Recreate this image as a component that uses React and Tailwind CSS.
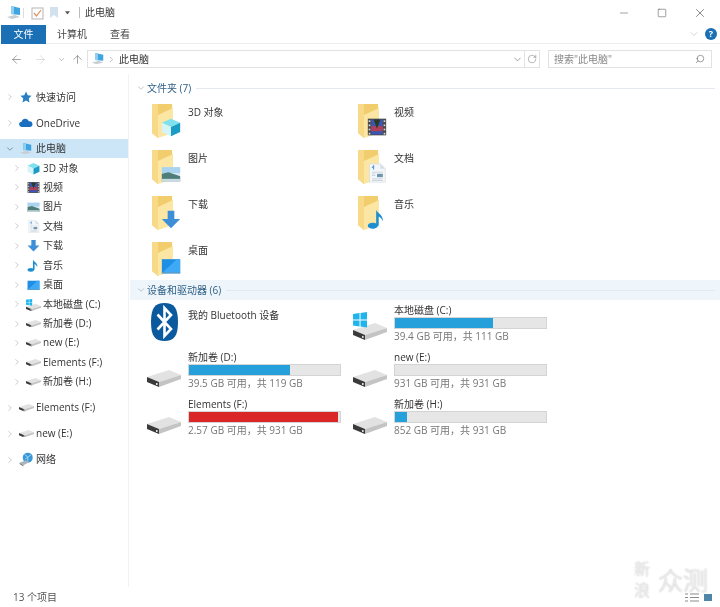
import { ArrowLeft, ArrowRight, ArrowUp, ChevronDown, ChevronRight, Minus, RotateCw, Search, Square, X } from "lucide-react";

function Cube() {
    return (
        <g>
            <polygon points="12,2 23,7 12,12 1,7" fill="#7fe0ee" />
            <polygon points="1,7 12,12 12,23 1,18" fill="#d4f4f8" />
            <polygon points="23,7 12,12 12,23 23,18" fill="#1a9cc4" />
        </g>
    );
}
function Film() {
    return (
        <g>
            <rect x="1" y="2" width="22" height="20" fill="#4a4a4a" />
            <rect x="5" y="3" width="14" height="18" fill="#3b55b0" />
            <rect x="5" y="11" width="14" height="6" fill="#b0405a" />
            <path d="M8 3h8l-4 11z" fill="#2a3a20" />
            <rect x="2" y="4" width="2" height="2" fill="#ddd" />
            <rect x="2" y="9" width="2" height="2" fill="#ddd" />
            <rect x="2" y="14" width="2" height="2" fill="#ddd" />
            <rect x="2" y="19" width="2" height="2" fill="#ddd" />
            <rect x="20" y="4" width="2" height="2" fill="#ddd" />
            <rect x="20" y="9" width="2" height="2" fill="#ddd" />
            <rect x="20" y="14" width="2" height="2" fill="#ddd" />
            <rect x="20" y="19" width="2" height="2" fill="#ddd" />
        </g>
    );
}
function Picture() {
    return (
        <g>
            <rect x="1" y="5" width="22" height="17" fill="#d6e8f2" />
            <rect x="1" y="5" width="22" height="7" fill="#a9d3ee" />
            <path d="M1 13l8-2 14 5v6H1z" fill="#4f7d78" />
            <path d="M1 19h22v3H1z" fill="#c9dbe2" />
        </g>
    );
}
function Doc() {
    return (
        <g>
            <path d="M3 1h13l6 6v16H3z" fill="#f4f7fa" stroke="#c8d2da" strokeWidth="0.6" />
            <path d="M16 1v6h6z" fill="#d5dee6" />
            <path d="M6 6l2-3 0 5" fill="none" stroke="#4a8fd0" strokeWidth="1.2" />
            <path d="M6 11h13M6 19h13M6 21h13" stroke="#b8c4ce" strokeWidth="0.8" />
            <rect x="12" y="13" width="7" height="4" fill="#6f95ad" />
            <path d="M6 13h4M6 15h4" stroke="#b8c4ce" strokeWidth="0.8" />
        </g>
    );
}
function DownArrow() {
    return <polygon points="8,2 16,2 16,12 23,12 12,23 1,12 8,12" fill="#3d8fd8" />;
}
function Note() {
    return (
        <g>
            <ellipse cx="7" cy="20" rx="6" ry="3.6" fill="#1b8fd0" />
            <path d="M11 20V1c1 4 9 6 8 14-1-3-3-5-5-6v11z" fill="#1b8fd0" />
        </g>
    );
}
function Desktop() {
    return (
        <g>
            <rect x="1" y="5" width="22" height="17" fill="#1f8fe6" />
            <path d="M1 22L19 5h4v17z" fill="#3fa9f5" />
            <rect x="1" y="20.5" width="22" height="1.5" fill="#5a9ec8" />
        </g>
    );
}

const overlays = { cube: Cube, film: Film, picture: Picture, doc: Doc, arrow: DownArrow, note: Note, desktop: Desktop };

function Folder({ kind }) {
    const Over = overlays[kind];
    return (
        <svg width="36" height="36" viewBox="0 0 36 36" className="shrink-0">
            <polygon points="0,1 20,1 21,30 8,30 6,35 0,30" fill="#f2cd6e" />
            <polygon points="6,12 21,5 21,30 6,35" fill="#fbe6a3" />
            <polygon points="0,1 6,1 6,35 0,30" fill="#f7d987" />
            <svg x="9" y="14" width="20" height="20" viewBox="0 0 24 24">
                <Over />
            </svg>
        </svg>
    );
}

function SmallIcon({ kind }) {
    const Over = overlays[kind];
    return (
        <svg width="13" height="13" viewBox="0 0 24 24" className="shrink-0">
            <Over />
        </svg>
    );
}

function Drive({ w = 34, win = false }) {
    return (
        <svg width={w} height={win ? w * 0.88 : w * 0.5} viewBox={win ? "0 -13 34 30" : "0 0 34 17"} className="shrink-0">
            <polygon points="0,7 22,0 34,5 12,12" fill="#e2e2e2" />
            <polygon points="12,12 34,5 34,9 12,17" fill="#c4c4c4" />
            <polygon points="0,7 12,12 12,17 0,12" fill="#3a3a3a" />
            <rect x="9" y="13" width="1.6" height="2" fill="#ddd" />
            {win && (
                <g fill="#1fb4ec">
                    <polygon points="0,-9 6.5,-10 6.5,-3.5 0,-3.5" />
                    <polygon points="7.5,-10 14,-11 14,-3.5 7.5,-3.5" />
                    <polygon points="0,-2.5 6.5,-2.5 6.5,3.5 0,2.5" />
                    <polygon points="7.5,-2.5 14,-2.5 14,4.5 7.5,3.5" />
                </g>
            )}
        </svg>
    );
}

function PcIcon({ size = 16 }) {
    return (
        <svg width={size} height={size} viewBox="0 0 16 16" className="shrink-0">
            <polygon points="5,1 14,3 14,10 5,9" fill="#3fa4e0" />
            <polygon points="5,1 8,1.6 8,9.4 5,9" fill="#8fd0f2" />
            <polygon points="1,12 9,10 14,12 6,14" fill="#c9ced2" />
        </svg>
    );
}

function Star() {
    return (
        <svg width="12" height="12" viewBox="0 0 24 24" className="shrink-0">
            <polygon points="12,1 15.5,8.5 23,9.5 17.5,15 19,23 12,19 5,23 6.5,15 1,9.5 8.5,8.5" fill="#2a7fc4" />
        </svg>
    );
}
function Cloud() {
    return (
        <svg width="14" height="14" viewBox="0 0 24 24" className="shrink-0">
            <path d="M5 19a4.5 4.5 0 0 1-.5-9A6.5 6.5 0 0 1 17 9a5 5 0 0 1 2 10z" fill="#1a6fc0" />
        </svg>
    );
}
function Network() {
    return (
        <svg width="15" height="15" viewBox="0 0 24 24" className="shrink-0">
            <circle cx="14" cy="9" r="8" fill="#3a98d8" />
            <path d="M9 4c4 2 6 5 5 10M19 5c-3 1-6 5-9 6" stroke="#a8dcf5" strokeWidth="1.5" fill="none" />
            <polygon points="1,17 11,13 17,16 7,21" fill="#a9b4bc" />
            <polygon points="1,17 7,21 7,23 1,19" fill="#6f7a82" />
        </svg>
    );
}
function Bluetooth() {
    return (
        <svg width="27" height="38" viewBox="0 0 27 38" className="shrink-0">
            <path d="M13.5 0C23 0 27 5 27 19S23 38 13.5 38 0 33 0 19 4 0 13.5 0z" fill="#0b5a9e" />
            <path d="M6.5 11.5L20 26l-6.5 7V5L20 12 6.5 26.5" fill="none" stroke="#fff" strokeWidth="2.6" />
        </svg>
    );
}

function NavRow({ label, icon, open, child, selected }) {
    return (
        <div className={`h-[19.45px] flex items-center ${child ? "pl-[12px]" : "pl-[5px]"} ${selected ? "bg-[#cde6f7]" : ""}`}>
            {open ? (
                <ChevronDown size={10} strokeWidth={1.4} className="text-[#555] shrink-0" />
            ) : (
                <ChevronRight size={10} strokeWidth={1.2} className="text-[#999] shrink-0" />
            )}
            <span className="w-[20px] flex justify-center items-center ml-[1px]">{icon}</span>
            <span className="text-[10px] text-[#333] whitespace-nowrap">{label}</span>
        </div>
    );
}

function FolderTile({ kind, name }) {
    return (
        <div className="flex pl-[22px]">
            <Folder kind={kind} />
            <span className="text-[10px] leading-[14px] text-[#333] mt-[2px]">{name}</span>
        </div>
    );
}

function DriveTile({ name, free, used, red, win }) {
    return (
        <div className="h-[47px] flex pl-[17px] gap-[7px]">
            <div className="w-[34px] h-[37px] flex items-end shrink-0">
                <Drive win={win} />
            </div>
            <div className="w-[153px] shrink-0">
                <div className="text-[10px] leading-[14px] text-[#333]">{name}</div>
                <div className="h-[12px] bg-[#e6e6e6] border border-[#d4d4d4]">
                    <div className={`h-full ${red ? "bg-[#da2626]" : "bg-[#26a0da]"}`} style={{ width: used + "%" }}></div>
                </div>
                <div className="text-[10px] leading-[15px] text-[#777] whitespace-nowrap">{free}</div>
            </div>
        </div>
    );
}

function SectionHeader({ title, active }) {
    return (
        <div className={`h-[20px] flex items-center pl-[6px] pr-[5px] ${active ? "bg-[#eef6fb]" : ""}`}>
            <ChevronDown size={10} strokeWidth={1} className="text-[#777] shrink-0" />
            <span className="text-[10px] text-[#2f5f86] ml-[1px] whitespace-nowrap">{title}</span>
            <div className="flex-1 h-px bg-[#e3e9ee] ml-[5px]"></div>
        </div>
    );
}

export default function App() {
    return (
        <div className="w-[720px] h-[607px] bg-white flex flex-col overflow-hidden relative blur-[0.3px] [font-family:'Open_Sans','Noto_Sans_CJK_SC',sans-serif]">
            {/* title bar */}
            <div className="h-[25px] shrink-0 flex items-center pl-[6px] text-[10px] text-[#333]">
                <PcIcon />
                <div className="w-px h-[10px] bg-[#ddd] ml-[1px]"></div>
                <svg width="13" height="14" viewBox="0 0 13 14" className="ml-[7px]">
                    <rect x="1" y="2" width="11" height="11" fill="#fff" stroke="#b5b5b5" />
                    <path d="M3 7l2.5 3L10 4" stroke="#dc8f62" strokeWidth="1.2" fill="none" />
                </svg>
                <svg width="10" height="13" viewBox="0 0 10 13" className="ml-[5px]">
                    <path d="M1 1h8v11L5 9l-4 3z" fill="#d3e0ee" />
                </svg>
                <svg width="5" height="5" viewBox="0 0 6 6" className="ml-[6px]">
                    <path d="M0 1.5h6L3 5.5z" fill="#555" />
                </svg>
                <div className="w-px h-[11px] bg-[#bbb] ml-[9px]"></div>
                <span className="ml-[5px]">此电脑</span>
                <div className="ml-auto flex items-center">
                    <span className="w-[38px] flex justify-center"><Minus size={12} strokeWidth={1} className="text-[#444]" /></span>
                    <span className="w-[38px] flex justify-center"><Square size={10} strokeWidth={1.1} className="text-[#333]" /></span>
                    <span className="w-[38px] flex justify-center"><X size={14} strokeWidth={1} className="text-[#333]" /></span>
                    <span className="w-[1px]"></span>
                </div>
            </div>
            {/* ribbon tabs */}
            <div className="h-[19px] shrink-0 flex items-center border-b border-[#eeeeee] pl-[1px] text-[10px] text-[#444]">
                <div className="w-[45px] h-[19px] bg-[#1a6fb5] text-white flex items-center justify-center">文件</div>
                <span className="ml-[11px]">计算机</span>
                <span className="ml-[23px]">查看</span>
                <div className="ml-auto flex items-center pr-[3px]">
                    <ChevronDown size={12} strokeWidth={1} className="text-[#aaa] mr-[5px]" />
                    <span className="w-[12px] h-[12px] rounded-full bg-[#1a6fb5] text-white text-[9px] font-bold flex items-center justify-center">?</span>
                </div>
            </div>
            {/* address row */}
            <div className="h-[30px] shrink-0 flex items-center text-[10px]">
                <span className="w-[23px] flex justify-end"><ArrowLeft size={13} strokeWidth={1} className="text-[#555]" /></span>
                <span className="w-[24px] flex justify-end"><ArrowRight size={13} strokeWidth={1} className="text-[#c4c4c4]" /></span>
                <span className="w-[19px] flex justify-end"><ChevronDown size={9} strokeWidth={1.2} className="text-[#777]" /></span>
                <span className="w-[16px] flex justify-center ml-[3px]"><ArrowUp size={13} strokeWidth={1} className="text-[#555]" /></span>
                <div className="ml-[2px] w-[438px] h-[18px] border border-[#e2e2e2] flex items-center pl-[3px] pr-[1px]">
                    <PcIcon size={14} />
                    <ChevronRight size={9} strokeWidth={1.2} className="text-[#777] ml-[2px]" />
                    <span className="ml-[3px] text-[#333]">此电脑</span>
                    <ChevronDown size={11} strokeWidth={1.2} className="text-[#555] ml-auto" />
                </div>
                <div className="w-[15px] h-[18px] border border-l-0 border-[#e2e2e2] flex items-center justify-center">
                    <RotateCw size={10} strokeWidth={1} className="text-[#555]" />
                </div>
                <div className="ml-[8px] w-[164px] h-[18px] border border-[#e2e2e2] flex items-center pl-[5px] pr-[6px] text-[#888]">
                    <span>搜索"此电脑"</span>
                    <Search size={10} strokeWidth={1.2} className="text-[#444] ml-auto -scale-x-100" />
                </div>
            </div>
            {/* body */}
            <div className="flex-1 flex min-h-0">
                <div className="w-[128px] shrink-0 pt-[13.5px] flex flex-col">
                    <NavRow label="快速访问" icon={<Star />} />
                    <div className="mt-[6.5px]"><NavRow label="OneDrive" icon={<Cloud />} /></div>
                    <div className="mt-[6px]"><NavRow label="此电脑" icon={<PcIcon size={14} />} open selected /></div>
                    <NavRow child label="3D 对象" icon={<SmallIcon kind="cube" />} />
                    <NavRow child label="视频" icon={<SmallIcon kind="film" />} />
                    <NavRow child label="图片" icon={<SmallIcon kind="picture" />} />
                    <NavRow child label="文档" icon={<SmallIcon kind="doc" />} />
                    <NavRow child label="下载" icon={<SmallIcon kind="arrow" />} />
                    <NavRow child label="音乐" icon={<SmallIcon kind="note" />} />
                    <NavRow child label="桌面" icon={<SmallIcon kind="desktop" />} />
                    <NavRow child label="本地磁盘 (C:)" icon={<Drive w={15} win />} />
                    <NavRow child label="新加卷 (D:)" icon={<Drive w={15} />} />
                    <NavRow child label="new (E:)" icon={<Drive w={15} />} />
                    <NavRow child label="Elements (F:)" icon={<Drive w={15} />} />
                    <NavRow child label="新加卷 (H:)" icon={<Drive w={15} />} />
                    <div className="mt-[6.5px]"><NavRow label="Elements (F:)" icon={<Drive w={15} />} /></div>
                    <div className="mt-[6.5px]"><NavRow label="new (E:)" icon={<Drive w={15} />} /></div>
                    <div className="mt-[6.5px]"><NavRow label="网络" icon={<Network />} /></div>
                </div>
                <div className="flex-1 border-l border-[#f2f2f2] pl-[1px] pt-[4px] min-w-0">
                    <SectionHeader title="文件夹 (7)" />
                    <div className="mt-[5px] grid grid-cols-[206px_206px] grid-rows-[46px_46px_46px_38px]">
                        <FolderTile kind="cube" name="3D 对象" />
                        <FolderTile kind="film" name="视频" />
                        <FolderTile kind="picture" name="图片" />
                        <FolderTile kind="doc" name="文档" />
                        <FolderTile kind="arrow" name="下载" />
                        <FolderTile kind="note" name="音乐" />
                        <FolderTile kind="desktop" name="桌面" />
                    </div>
                    <div className="mt-[1px]"><SectionHeader title="设备和驱动器 (6)" active /></div>
                    <div className="mt-[3px] grid grid-cols-[206px_206px]">
                        <div className="h-[47px] flex pl-[21px]">
                            <Bluetooth />
                            <span className="ml-[10px] mt-[5px] text-[10px] leading-[14px] text-[#333]">我的 Bluetooth 设备</span>
                        </div>
                        <DriveTile name="本地磁盘 (C:)" free="39.4 GB 可用，共 111 GB" used={65} win />
                        <DriveTile name="新加卷 (D:)" free="39.5 GB 可用，共 119 GB" used={67} />
                        <DriveTile name="new (E:)" free="931 GB 可用，共 931 GB" used={0} />
                        <DriveTile name="Elements (F:)" free="2.57 GB 可用，共 931 GB" used={99} red />
                        <DriveTile name="新加卷 (H:)" free="852 GB 可用，共 931 GB" used={8} />
                    </div>
                </div>
            </div>
            {/* status bar */}
            <div className="h-[20px] shrink-0 flex items-center pl-[13px] pr-[8px] text-[10px] text-[#555]">
                <span>13 个项目</span>
                <div className="ml-auto flex items-center gap-[5px]">
                    <svg width="14" height="9" viewBox="0 0 14 9">
                        <path d="M0 1h3M5 1h9M0 4.5h3M5 4.5h9M0 8h3M5 8h9" stroke="#8a8a8a" strokeWidth="1" />
                    </svg>
                    <svg width="8" height="7" viewBox="0 0 8 7">
                        <rect width="8" height="7" fill="#4f86a8" />
                    </svg>
                </div>
            </div>
            {/* watermark */}
            <div className="absolute left-[634px] top-[559px] flex items-center text-[#ececec] [text-shadow:0_0_2px_rgba(0,0,0,0.3)] pointer-events-none">
                <div className="w-[17px] text-[16px] leading-[21px] font-light">
                    <div>新</div>
                    <div>浪</div>
                </div>
                <div className="ml-[7px] text-[25px] leading-[30px] font-light whitespace-nowrap">众测</div>
            </div>
        </div>
    );
}
